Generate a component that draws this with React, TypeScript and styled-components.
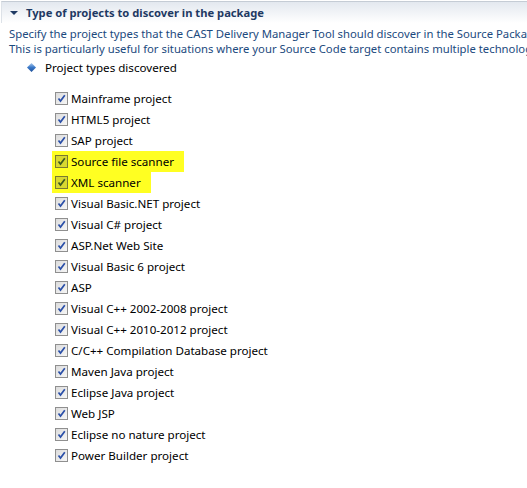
import React from 'react'
import styled, { createGlobalStyle } from 'styled-components'

const items = [
  'Mainframe project',
  'HTML5 project',
  'SAP project',
  'Source file scanner',
  'XML scanner',
  'Visual Basic.NET project',
  'Visual C# project',
  'ASP.Net Web Site',
  'Visual Basic 6 project',
  'ASP',
  'Visual C++ 2002-2008 project',
  'Visual C++ 2010-2012 project',
  'C/C++ Compilation Database project',
  'Maven Java project',
  'Eclipse Java project',
  'Web JSP',
  'Eclipse no nature project',
  'Power Builder project',
]

const marked = ['Source file scanner', 'XML scanner']

const App = () => {
  return (
    <Page>
      <Global />
      <Header>
        <Twisty />
        <Title>Type of projects to discover in the package</Title>
      </Header>
      <Desc>
        <Line>Specify the project types that the CAST Delivery Manager Tool should discover in the Source Package.</Line>
        <Line>This is particularly useful for situations where your Source Code target contains multiple technologies.</Line>
      </Desc>
      <Group>
        <Diamond viewBox="0 0 9 9">
          <defs>
            <linearGradient id="dg" x1="0" y1="0" x2="0" y2="1">
              <stop offset="0" stopColor="#a9c8ec" />
              <stop offset="0.5" stopColor="#3a78c8" />
              <stop offset="1" stopColor="#1d4f98" />
            </linearGradient>
          </defs>
          <path d="M4.5 0 L9 4.5 L4.5 9 L0 4.5 Z" fill="url(#dg)" />
        </Diamond>
        Project types discovered
      </Group>
      <List>
        {items.map((t) => (
          <Row key={t}>
            <Mark $on={marked.includes(t)}>
              <Box $hl={marked.includes(t)}>
                <svg width="9" height="9" viewBox="0 0 9 9">
                  <path d="M1.5 4.5 L3.5 7 L7.8 1.2" fill="none" stroke={marked.includes(t) ? '#3d5a1e' : '#2a4fa8'} strokeWidth="1.7" />
                </svg>
              </Box>
              <Label>{t}</Label>
            </Mark>
          </Row>
        ))}
      </List>
    </Page>
  )
}

export default App

const Global = createGlobalStyle`
  body {
    margin: 0;
    background: #fff;
    font-family: "Segoe UI", "Noto Sans", "DejaVu Sans", sans-serif;
    font-size: 11.6px;
  }
`
const Page = styled.div`
  width: 527px;
  height: 488px;
  overflow: hidden;
  background: #fff;
`
const Header = styled.div`
  margin: 1px 0 0 1px;
  height: 21px;
  border-top: 1px solid #c5ccd5;
  border-left: 1px solid #dde2e8;
  background: linear-gradient(#e3e8ef, #ffffff);
  display: flex;
  align-items: center;
  padding-left: 8px;
`
const Twisty = styled.div`
  width: 0;
  height: 0;
  border-left: 4px solid transparent;
  border-right: 4px solid transparent;
  border-top: 4px solid #1f3a63;
  margin-right: 8px;
  margin-top: 1px;
`
const Title = styled.div`
  font-weight: bold;
  font-size: 11.2px;
  color: #1f3a63;
  white-space: nowrap;
`
const Desc = styled.div`
  padding: 3px 0 0 9px;
  color: #1c4a7e;
  font-size: 11.3px;
  overflow: hidden;
`
const Line = styled.div`
  height: 15px;
  line-height: 15px;
  white-space: nowrap;
`
const Group = styled.div`
  display: flex;
  align-items: center;
  padding: 3px 0 0 27px;
  color: #000;
  height: 16px;
`
const Diamond = styled.svg`
  width: 9px;
  height: 9px;
  margin-right: 9px;
`
const List = styled.div`
  padding: 13px 0 0 52px;
  display: flex;
  flex-direction: column;
`
const Row = styled.div`
  height: 21px;
  display: flex;
  align-items: center;
`
const Mark = styled.div<{ $on: boolean }>`
  display: flex;
  align-items: center;
  height: 100%;
  padding: 0 ${(p) => (p.$on ? '10px' : '0')} 0 3px;
  background: ${(p) => (p.$on ? '#ffff22' : 'transparent')};
`
const Box = styled.div<{ $hl: boolean }>`
  width: 11px;
  height: 11px;
  border: 1px solid ${(p) => (p.$hl ? '#7a7a30' : '#8f8f8f')};
  background: ${(p) => (p.$hl ? '#d8d830' : 'linear-gradient(135deg, #dcdcdc, #f6f6f6)')};
  display: flex;
  align-items: center;
  justify-content: center;
  margin-right: 3px;
`
const Label = styled.span`
  color: #000;
  white-space: nowrap;
`
